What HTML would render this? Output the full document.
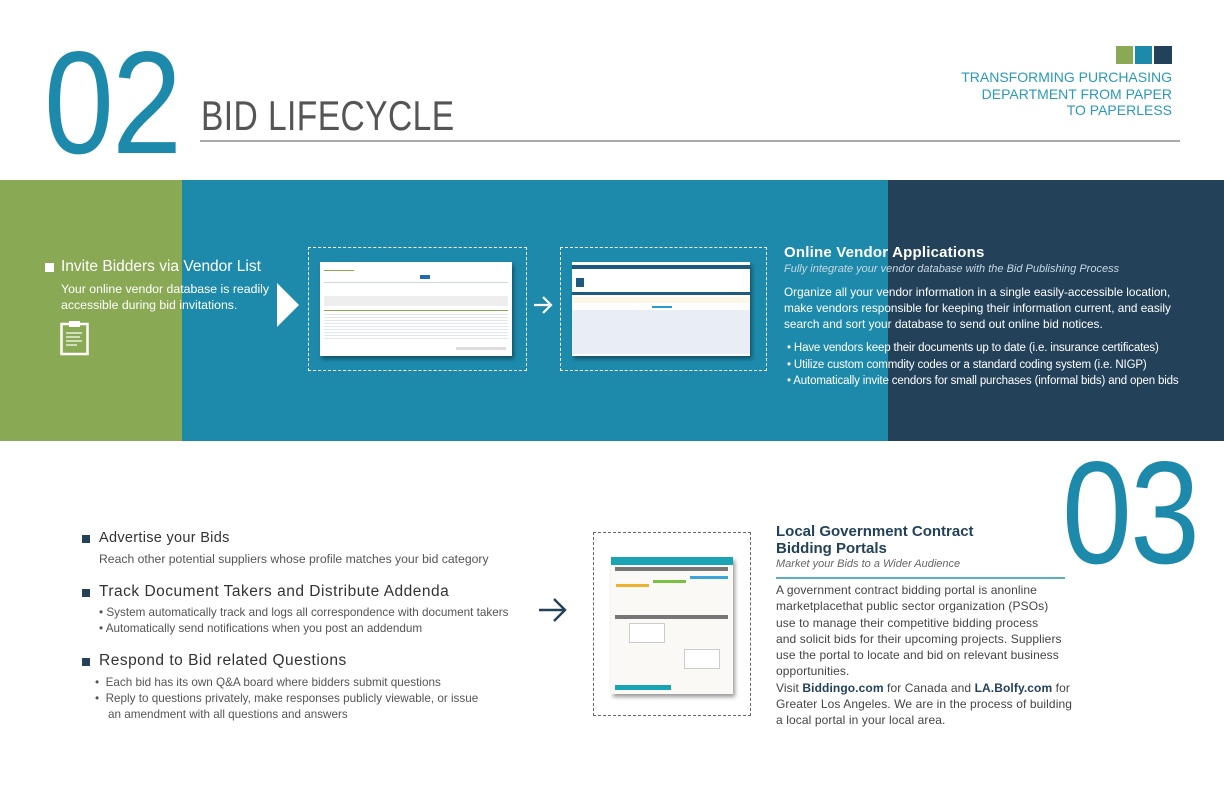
<!DOCTYPE html>
<html><head><meta charset="utf-8"><style>
*{margin:0;padding:0;box-sizing:border-box}
body{width:1224px;height:792px;position:relative;background:#fff;font-family:"Liberation Sans",sans-serif;overflow:hidden}
.a{position:absolute;white-space:nowrap}
.big{font-size:146px;color:#1e8aab;line-height:1;transform:scaleX(.86);transform-origin:0 0;letter-spacing:-2px;font-weight:normal}
.w{color:#fff}
.g{color:#555}
.shot{position:absolute;background:#fff;box-shadow:2px 3px 4px rgba(0,0,0,.4)}
.ln{position:absolute;height:2px;background:#cfd6dc}
.dash{position:absolute;border:1px dashed #fff}
</style></head><body>
<div class="a big" style="left:44px;top:30px">02</div>
<div class="a" style="left:201px;top:92px;font-size:42px;color:#555;transform:scaleX(.8);transform-origin:0 0;letter-spacing:.5px">BID LIFECYCLE</div>
<div class="a" style="left:200px;top:140px;width:980px;height:2px;background:#a9a9a9"></div>
<div class="a" style="left:1116px;top:46px;width:17px;height:18px;background:#8aa955"></div>
<div class="a" style="left:1135px;top:46px;width:17px;height:18px;background:#1e8aab"></div>
<div class="a" style="left:1154px;top:46px;width:18px;height:18px;background:#23425a"></div>
<div class="a" style="right:52px;top:69px;text-align:right;font-size:14px;line-height:16.5px;color:#2a9ab8">TRANSFORMING PURCHASING<br>DEPARTMENT FROM PAPER<br>TO PAPERLESS</div>

<div class="a" style="left:0;top:180px;width:182px;height:261px;background:#8aa955"></div>
<div class="a" style="left:182px;top:180px;width:706px;height:261px;background:#1e8aab"></div>
<div class="a" style="left:888px;top:180px;width:336px;height:261px;background:#23425a"></div>

<div class="a" style="left:45px;top:263px;width:9px;height:9px;background:#fff"></div>
<div class="a w" style="left:61px;top:258px;font-size:15.5px">Invite Bidders via Vendor List</div>
<div class="a w" style="left:61px;top:281px;font-size:12.3px;line-height:16px">Your online vendor database is readily<br>accessible during bid invitations.</div>
<svg class="a" style="left:60px;top:320px" width="30" height="36" viewBox="0 0 30 36"><rect x="1.5" y="4" width="26" height="30" fill="none" stroke="#fff" stroke-width="2.5"/><rect x="9" y="1" width="11" height="6" fill="#fff"/><g stroke="#fff" stroke-width="1.2"><line x1="6" y1="13" x2="22" y2="13"/><line x1="6" y1="17" x2="20" y2="17"/><line x1="6" y1="21" x2="22" y2="21"/><line x1="6" y1="25" x2="17" y2="25"/></g></svg>
<svg class="a" style="left:277px;top:283px" width="22" height="44"><polygon points="0,0 22,22 0,44" fill="#fff"/></svg>

<div class="dash" style="left:308px;top:247px;width:219px;height:124px"></div>
<div class="shot" style="left:320px;top:262px;width:192px;height:94px">
<div class="ln" style="left:4px;top:8px;width:30px;background:#8aa955;height:1px"></div>
<div class="ln" style="left:4px;top:20px;width:184px;height:1px"></div>
<div class="ln" style="left:100px;top:13px;width:10px;height:4px;background:#1e6fb0"></div>
<div class="ln" style="left:4px;top:34px;width:184px;height:10px;background:#eee"></div>
<div class="ln" style="left:4px;top:48px;width:184px;height:1px;background:#8aa955"></div>
<div class="ln" style="left:4px;top:52px;width:184px;height:26px;background:repeating-linear-gradient(#dfe6ee 0 1px,#fff 1px 3px)"></div>
<div class="ln" style="left:136px;top:85px;width:50px;height:3px;background:#ddd"></div>
</div>
<svg class="a" style="left:533px;top:296px" width="20" height="18"><path d="M1 9H18M10 1L18 9L10 17" fill="none" stroke="#fff" stroke-width="2.2"/></svg>
<div class="dash" style="left:560px;top:247px;width:207px;height:124px"></div>
<div class="shot" style="left:572px;top:262px;width:178px;height:94px">
<div class="ln" style="left:0;top:3px;width:178px;height:4px;background:#1e5a80"></div>
<div class="ln" style="left:4px;top:16px;width:8px;height:9px;background:#1e5a80"></div>
<div class="ln" style="left:0;top:30px;width:178px;height:3px;background:#1e5a80"></div>
<div class="ln" style="left:0;top:35px;width:178px;height:6px;background:#fbf7e6"></div>
<div class="ln" style="left:80px;top:44px;width:20px;height:2px;background:#2a9ad0"></div>
<div class="ln" style="left:0;top:48px;width:178px;height:44px;background:#e8eef4"></div>
</div>

<div class="a w" style="left:784px;top:244px;font-size:15px;font-weight:bold;letter-spacing:.2px">Online Vendor Applications</div>
<div class="a" style="left:784px;top:263px;font-size:11px;font-style:italic;color:#c8d8e2">Fully integrate your vendor database with the Bid Publishing Process</div>
<div class="a w" style="left:784px;top:284px;font-size:11.8px;line-height:16px">Organize all your vendor information in a single easily-accessible location,<br>make vendors responsible for keeping their information current, and easily<br>search and sort your database to send out online bid notices.</div>
<div class="a w" style="left:787px;top:340px;font-size:11.5px;line-height:16.5px;letter-spacing:-.15px">• Have vendors keep their documents up to date (i.e. insurance certificates)<br>• Utilize custom commdity codes or a standard coding system (i.e. NIGP)<br>• Automatically invite cendors for small purchases (informal bids) and open bids</div>

<div class="a big" style="left:1062px;top:440px">03</div>

<div class="a" style="left:82px;top:535px;width:8px;height:8px;background:#23425a"></div>
<div class="a" style="left:99px;top:530px;font-size:14.5px;color:#333;letter-spacing:.3px">Advertise your Bids</div>
<div class="a g" style="left:99px;top:552px;font-size:12.2px">Reach other potential suppliers whose profile matches your bid category</div>
<div class="a" style="left:82px;top:589px;width:8px;height:8px;background:#23425a"></div>
<div class="a" style="left:99px;top:583px;font-size:15.5px;color:#333;letter-spacing:.5px">Track Document Takers and Distribute Addenda</div>
<div class="a g" style="left:99px;top:605px;font-size:11.7px;line-height:16px">• System automatically track and logs all correspondence with document takers<br>• Automatically send notifications when you post an addendum</div>
<div class="a" style="left:82px;top:658px;width:8px;height:8px;background:#23425a"></div>
<div class="a" style="left:99px;top:652px;font-size:15.5px;color:#333;letter-spacing:.5px">Respond to Bid related Questions</div>
<div class="a g" style="left:95px;top:675px;font-size:11.7px;line-height:16px">• &nbsp;Each bid has its own Q&amp;A board where bidders submit questions<br>• &nbsp;Reply to questions privately, make responses publicly viewable, or issue<br>&nbsp;&nbsp;&nbsp;&nbsp;an amendment with all questions and answers</div>

<svg class="a" style="left:538px;top:598px" width="30" height="24"><path d="M1 12H27M16 1L27 12L16 23" fill="none" stroke="#23425a" stroke-width="2.4"/></svg>
<div class="a" style="left:593px;top:532px;width:158px;height:184px;border:1px dashed #666"></div>
<div class="shot" style="left:611px;top:557px;width:122px;height:137px;background:#faf9f5">
<div class="ln" style="left:0;top:0;width:122px;height:8px;background:#1aa3b5"></div>
<div class="ln" style="left:4px;top:10px;width:113px;height:4px;background:#777"></div>
<div class="ln" style="left:5px;top:27px;width:33px;height:3px;background:#f0b030"></div>
<div class="ln" style="left:42px;top:23px;width:33px;height:3px;background:#7bc043"></div>
<div class="ln" style="left:79px;top:19px;width:38px;height:3px;background:#3aa6dc"></div>
<div class="ln" style="left:4px;top:58px;width:113px;height:4px;background:#777"></div>
<div class="ln" style="left:18px;top:66px;width:36px;height:20px;background:#fff;border:1px solid #ccc"></div>
<div class="ln" style="left:73px;top:92px;width:36px;height:20px;background:#fff;border:1px solid #ccc"></div>
<div class="ln" style="left:4px;top:128px;width:56px;height:5px;background:#1aa3b5"></div>
</div>

<div class="a" style="left:776px;top:523px;font-size:15px;font-weight:bold;color:#23425a;line-height:17px">Local Government Contract<br>Bidding Portals</div>
<div class="a" style="left:776px;top:558px;font-size:11px;font-style:italic;color:#666">Market your Bids to a Wider Audience</div>
<div class="a" style="left:776px;top:577px;width:289px;height:2px;background:#5aaecb"></div>
<div class="a" style="left:776px;top:582px;font-size:12px;line-height:16.3px;color:#444;letter-spacing:.1px">A government contract bidding portal is anonline<br>marketplacethat public sector organization (PSOs)<br>use to manage their competitive bidding process<br>and solicit bids for their upcoming projects. Suppliers<br>use the portal to locate and bid on relevant business<br>opportunities.<br>Visit <b style="color:#23425a">Biddingo.com</b> for Canada and <b style="color:#23425a">LA.Bolfy.com</b> for<br>Greater Los Angeles. We are in the process of building<br>a local portal in your local area.</div>
</body></html>
